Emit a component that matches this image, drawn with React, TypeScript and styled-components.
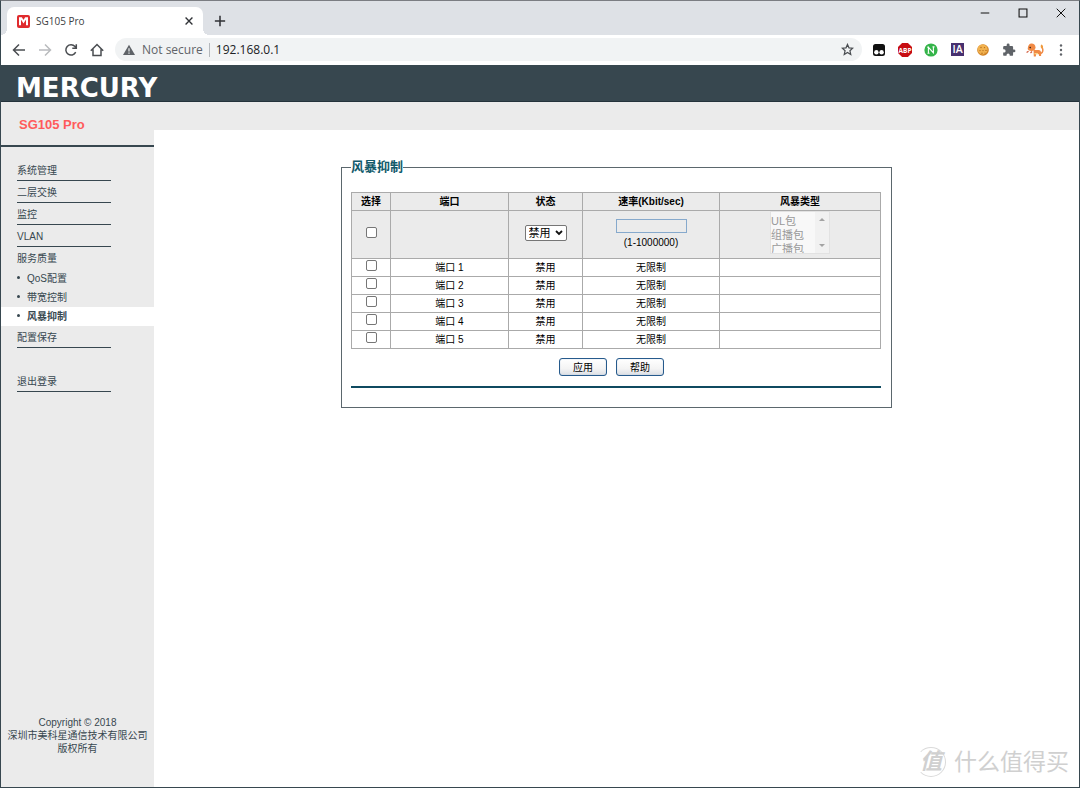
import React from 'react';
import styled, { createGlobalStyle } from 'styled-components';

const GlobalStyle = createGlobalStyle`
  *, *::before, *::after { box-sizing: border-box; }
  body {
    margin: 0;
    font-family: "Liberation Sans", "Noto Sans CJK SC", sans-serif;
    font-size: 10px;
    line-height: 14px;
    color: #000;
    background: #fff;
  }
  a { color: inherit; text-decoration: none; }
  button, input, select { font: inherit; color: inherit; margin: 0; padding: 0; }
  svg { display: block; }
`;

const chromeFont = '"Open Sans", "Noto Sans", sans-serif';

const Window = styled.div`
  display: flex;
  flex-direction: column;
  min-height: 100vh;
  border: 1px solid #37474f;
  border-top-color: #7b7d82;
  position: relative;
`;

/* ---------- browser frame ---------- */

const TabStrip = styled.div`
  display: flex;
  align-items: flex-end;
  height: 34px;
  padding-left: 6px;
  background: #dee1e6;
  font-family: ${chromeFont};
`;

const Tab = styled.div`
  display: flex;
  align-items: center;
  position: relative;
  width: 196px;
  height: 28px;
  padding: 0 8px 0 10px;
  border-radius: 7px 7px 0 0;
  background: #fff;
  font-size: 10px;
  color: #3c4043;

  &::before, &::after {
    content: "";
    position: absolute;
    bottom: 0;
    width: 6px;
    height: 6px;
  }
  &::before { left: -6px; background: radial-gradient(circle at 0 0, #dee1e6 6px, #fff 6px); }
  &::after { right: -6px; background: radial-gradient(circle at 100% 0, #dee1e6 6px, #fff 6px); }
`;

const TabTitle = styled.span`
  flex: 1;
  margin-left: 6px;
`;

const IconButton = styled.button<{ $w?: number; $h?: number }>`
  display: flex;
  align-items: center;
  justify-content: center;
  flex: none;
  width: ${(p) => p.$w ?? 26}px;
  height: ${(p) => p.$h ?? 26}px;
  border: 0;
  background: none;
`;

const WindowControls = styled.div`
  display: flex;
  align-self: flex-start;
  margin-left: auto;
`;

const Toolbar = styled.div`
  display: flex;
  align-items: center;
  height: 30px;
  padding: 0 5px 1px;
  background: #fff;
  font-family: ${chromeFont};
`;

const Omnibox = styled.div`
  display: flex;
  align-items: center;
  flex: 1;
  height: 23px;
  margin: 0 4px 0 5px;
  padding: 0 2px 0 8px;
  border-radius: 12px;
  background: #f1f3f4;
  font-size: 12px;
  color: #5f6368;
`;

const Security = styled.span`
  margin-left: 7px;
  padding-right: 6px;
  border-right: 1px solid #b4b8bc;
  line-height: 14px;
  white-space: nowrap;
`;

const Address = styled.input`
  flex: 1;
  min-width: 0;
  margin-left: 6px;
  border: 0;
  outline: 0;
  background: none;
  color: #202124;
`;

/* ---------- page ---------- */

const Brand = styled.header`
  display: flex;
  align-items: center;
  height: 37px;
  padding: 9px 15px 0;
  border-bottom: 1px solid #24333b;
  background: #37474f;
  color: #fff;
  font: bold 26px/28px "DejaVu Sans", sans-serif;
`;

const Body = styled.div`
  display: flex;
  flex: 1;
  background: #ebebeb;
`;

const Sidebar = styled.aside`
  display: flex;
  flex-direction: column;
  flex: none;
  width: 153px;
  color: #37474f;
`;

const Model = styled.h1`
  margin: 0;
  height: 45px;
  padding-left: 18px;
  border-bottom: 2px solid #37474f;
  font-size: 13px;
  line-height: 45px;
  color: #ff5b5b;
`;

const Menu = styled.nav`
  display: flex;
  flex-direction: column;
  padding-top: 12px;
`;

const MenuItem = styled.a<{ $open?: boolean; $apart?: boolean }>`
  height: 22px;
  width: 94px;
  margin-left: 16px;
  margin-top: ${(p) => (p.$apart ? 22 : 0)}px;
  border-bottom: 1px solid ${(p) => (p.$open ? 'transparent' : '#37474f')};
  line-height: 24px;
`;

const SubItem = styled.a<{ $active?: boolean }>`
  display: flex;
  align-items: center;
  height: 19px;
  padding-left: 16px;
  background: ${(p) => (p.$active ? '#fff' : 'transparent')};
  font-weight: ${(p) => (p.$active ? 'bold' : 'normal')};

  &::before {
    content: "";
    width: 3px;
    height: 3px;
    margin: 0 7px 3px 0;
    border-radius: 50%;
    background: #37474f;
  }
`;

const Copyright = styled.footer`
  margin-top: auto;
  padding: 16px 0 32px;
  line-height: 13px;
  text-align: center;
`;

const Main = styled.main`
  flex: 1;
  margin-top: 28px;
  padding: 28px 16px 16px;
  background: #fff;
`;

const Panel = styled.fieldset`
  max-width: 549px;
  margin: 0 auto;
  padding: 16px 10px 19px 9px;
  border: 1px solid #5b676d;
`;

const Legend = styled.legend`
  padding: 0;
  font-size: 13px;
  line-height: 18px;
  font-weight: bold;
  color: #125a6b;
`;

const Table = styled.table`
  width: 100%;
  table-layout: fixed;
  border-collapse: collapse;
  text-align: center;
`;

const Col = styled.col<{ $w: number }>`
  width: ${(p) => p.$w}px;
`;

const Row = styled.tr<{ $head?: boolean; $edit?: boolean }>`
  height: ${(p) => (p.$edit ? 48 : 18)}px;
  background: ${(p) => (p.$head || p.$edit ? '#ebebeb' : '#fff')};

  th, td {
    padding: 0;
    border: 1px solid #aaa;
  }
`;

const Control = styled.div`
  padding-bottom: 4px;
`;

const Checkbox = styled.input.attrs({ type: 'checkbox' })`
  appearance: none;
  display: block;
  width: 11px;
  height: 11px;
  margin: 0 auto;
  border: 1px solid #767676;
  border-radius: 2px;
  background: #fff;

  &:checked { background: #1a73e8; }
`;

const SelectBox = styled.span`
  display: inline-grid;
  align-items: center;
  vertical-align: middle;

  > * { grid-area: 1 / 1; }
  > svg { justify-self: end; margin-right: 4px; pointer-events: none; }
`;

const Select = styled.select`
  appearance: none;
  width: 42px;
  height: 16px;
  padding-left: 3px;
  border: 1px solid #767676;
  border-radius: 2px;
  background: #fff;
  font-size: 11px;
  line-height: 14px;
`;

const RateInput = styled.input`
  display: block;
  width: 71px;
  height: 14px;
  margin: 0 auto 3px;
  border: 1px solid #86a9cc;
  background: #ebebeb;
`;

const ListBox = styled.div`
  display: flex;
  width: 60px;
  height: 43px;
  margin: 0 auto;
  border: 1px solid #e2e2e2;
  background: #f8f8f8;
`;

const List = styled.select`
  appearance: none;
  flex: 1;
  min-width: 0;
  height: 41px;
  border: 0;
  overflow: hidden;
  background: #f8f8f8;
  font-size: 11px;
  text-align: left;

  option {
    height: 14px;
    min-height: 0;
    padding: 0;
    line-height: 13px;
    color: #707070;
  }
`;

const ScrollTrack = styled.div`
  display: flex;
  flex-direction: column;
  align-items: center;
  justify-content: space-between;
  width: 14px;
  padding: 6px 0;
  background: #f1f1f1;
`;

const Actions = styled.div`
  display: flex;
  justify-content: center;
  gap: 9px;
  padding: 9px 9px 10px 0;
  border-bottom: 2px solid #0f4a60;
`;

const ActionButton = styled.button`
  width: 48px;
  height: 18px;
  border: 1px solid #265a8c;
  border-radius: 3px;
  background: linear-gradient(#fff, #f4f4f4 60%, #dcdfe4);
  line-height: 18px;
  box-shadow: inset 0 0 1px #8fb0d0;
`;

const Watermark = styled.div`
  position: absolute;
  right: 10px;
  bottom: 10px;
  display: flex;
  align-items: center;
  gap: 8px;
  font-size: 23px;
  line-height: 30px;
  color: #d0d0d0;
`;

const Seal = styled.span`
  display: flex;
  align-items: center;
  justify-content: center;
  width: 30px;
  height: 30px;
  border: 1px solid #dadada;
  border-left-color: transparent;
  border-radius: 50%;
  font-size: 22px;
  font-style: italic;
  font-weight: bold;
`;

/* ---------- drawings ---------- */

const Stroke = ({ d, size = 14, color = '#4a4d51', width = 1.5 }: { d: string; size?: number; color?: string; width?: number }) => (
  <svg width={size} height={size} viewBox="0 0 14 14" fill="none" stroke={color} strokeWidth={width}>
    <path d={d} />
  </svg>
);

const Favicon = () => (
  <svg width="13" height="13" viewBox="0 0 13 13">
    <rect width="13" height="13" rx="2" fill="#e02b2e" />
    <path d="M3 10.200V3.200h1.300l2.200 3.500 2.200-3.500H10v7" fill="none" stroke="#fff" strokeWidth="2" />
  </svg>
);

const Warning = () => (
  <svg width="12" height="12" viewBox="0 0 12 12">
    <path d="M6 .8 12 11H0z" fill="#5f6368" />
    <path d="M6 4.2v3.4M6 8.5v1.3" stroke="#f1f3f4" strokeWidth="1.2" />
  </svg>
);

const MaskIcon = () => (
  <svg width="12" height="12" viewBox="0 0 12 12">
    <path d="M2.500 0h7A2.500 2.500 0 0 1 12 2.500v7a2.500 2.500 0 0 1-2.500 2.500h-7A2.500 2.500 0 0 1 0 9.500v-7A2.500 2.500 0 0 1 2.500 0z" fill="#111" />
    <circle cx="3.400" cy="8.300" r="2.200" fill="#fff" />
    <circle cx="8.600" cy="8.300" r="2.200" fill="#fff" />
  </svg>
);

const BlockIcon = () => (
  <svg width="14" height="14" viewBox="0 0 14 14">
    <path d="M4.100 0h5.800L14 4.100v5.800L9.900 14H4.100L0 9.900V4.100z" fill="#c70d12" />
    <text x="7" y="9.500" textAnchor="middle" fontSize="6.500" fontWeight="bold" fontFamily="Open Sans" fill="#fff">ABP</text>
  </svg>
);

const NoteIcon = () => (
  <svg width="14" height="14" viewBox="0 0 14 14">
    <circle cx="7" cy="7" r="6.600" fill="#35b44a" />
    <path d="M4.400 10.200V4.300l5 5.600V3.800M3.200 4.200h1.700M8.500 3.900h2M3.500 10.200h2" fill="none" stroke="#fff" strokeWidth="1.100" />
  </svg>
);

const ArchiveIcon = () => (
  <svg width="13" height="13" viewBox="0 0 13 13">
    <rect width="13" height="13" fill="#47306f" />
    <text x="6.500" y="10.200" textAnchor="middle" fontSize="10.500" fontWeight="600" fontFamily="Open Sans" fill="#fff">IA</text>
  </svg>
);

const CookieIcon = () => (
  <svg width="12" height="12" viewBox="0 0 12 12">
    <circle cx="6" cy="6" r="5.800" fill="#cf7f22" />
    <circle cx="5.600" cy="5.400" r="5" fill="#f2b24f" />
    <g fill="#b06a1c">
      <circle cx="4" cy="3.500" r=".7" />
      <circle cx="7.500" cy="3.600" r=".7" />
      <circle cx="3" cy="6.600" r=".7" />
      <circle cx="6" cy="6.600" r=".7" />
      <circle cx="9" cy="6.400" r=".7" />
      <circle cx="5" cy="9.300" r=".7" />
      <circle cx="8" cy="9" r=".6" />
    </g>
  </svg>
);

const PuzzleIcon = () => (
  <svg width="14" height="14" viewBox="0 0 24 24" fill="#5f6368">
    <path d="M20.500 11H19V7a2 2 0 0 0-2-2h-4V3.500a2.500 2.500 0 0 0-5 0V5H4a2 2 0 0 0-2 2v3.800h1.500a2.700 2.700 0 0 1 0 5.400H2V20a2 2 0 0 0 2 2h3.800v-1.500a2.700 2.700 0 0 1 5.400 0V22H17a2 2 0 0 0 2-2v-4h1.500a2.500 2.500 0 0 0 0-5z" />
  </svg>
);

const PetIcon = () => (
  <svg width="18" height="14" viewBox="0 0 18 14">
    <path d="M16 4.500c1.400 2 1.200 5-1.200 6" fill="none" stroke="#f08a45" strokeWidth="1.500" />
    <path d="M15.300 1.500c1.600.6 2.200 2.200 1.500 4l-1.700-.6c-.7-1.200-.5-2.400.2-3.400z" fill="#ef9a3c" />
    <path d="M7.500 7h5c1.600 0 2.600 1.200 2.600 3v3h-2l-.5-2h-2.400l-.4 2.500h-2z" fill="#f08a45" />
    <path d="M8.500 10h3.500v1.300H8.500z" fill="#f7d488" />
    <path d="M5 .5C7.500.2 9.500 1.800 9.500 4.200 9.500 6.700 7.800 8 5.500 8 3 8 1.600 7 1.700 5.500 1.900 3 3 .8 5 .5z" fill="#f08a45" />
    <circle cx="4.200" cy="4.600" r=".8" fill="#31231c" />
    <path d="M.6 9.500 2.500 8.200M6 8.500l-1.500 1.500" stroke="#d0593a" strokeWidth="1.200" />
  </svg>
);

const Kebab = () => (
  <svg width="4" height="12" viewBox="0 0 4 12" fill="#5f6368">
    <circle cx="2" cy="1.500" r="1.200" />
    <circle cx="2" cy="6" r="1.200" />
    <circle cx="2" cy="10.500" r="1.200" />
  </svg>
);

const ScrollArrow = ({ up }: { up?: boolean }) => (
  <svg width="6" height="3" viewBox="0 0 6 3" fill="#a3a3a3">
    <path d={up ? 'M0 3 3 0l3 3z' : 'M0 0l3 3 3-3z'} />
  </svg>
);

/* ---------- data ---------- */

const extensions = [
  { name: 'Userscripts', icon: <MaskIcon /> },
  { name: 'Ad blocker', icon: <BlockIcon /> },
  { name: 'Notes', icon: <NoteIcon /> },
  { name: 'Archive', icon: <ArchiveIcon /> },
  { name: 'Cookies', icon: <CookieIcon /> },
  { name: 'Extensions', icon: <PuzzleIcon /> },
  { name: 'Profile', icon: <PetIcon /> },
  { name: 'Menu', icon: <Kebab /> },
];

const sections = ['系统管理', '二层交换', '监控', 'VLAN'];
const qosPages = ['QoS配置', '带宽控制', '风暴抑制'];
const headings = ['选择', '端口', '状态', '速率(Kbit/sec)', '风暴类型'];
const columnWidths = [39, 118, 74, 137, 161];
const ports = [1, 2, 3, 4, 5];

const Browser = () => (
  <>
    <TabStrip>
      <Tab>
        <Favicon />
        <TabTitle>SG105 Pro</TabTitle>
        <IconButton $w={12} $h={16} aria-label="Close tab">
          <Stroke size={12} color="#303236" width={1.6} d="M3 3l8 8M11 3l-8 8" />
        </IconButton>
      </Tab>
      <IconButton $w={34} $h={28} aria-label="New tab">
        <Stroke size={12} color="#303236" width={1.8} d="M7 1v12M1 7h12" />
      </IconButton>
      <WindowControls>
        <IconButton $w={38} $h={24} aria-label="Minimize">
          <Stroke size={10} color="#111" width={1.4} d="M1 7h12" />
        </IconButton>
        <IconButton $w={38} $h={24} aria-label="Maximize">
          <Stroke size={10} color="#111" width={1.5} d="M1.500 1.500h11v11h-11z" />
        </IconButton>
        <IconButton $w={37} $h={24} aria-label="Close">
          <Stroke size={10} color="#111" width={1.4} d="M1 1l12 12M13 1 1 13" />
        </IconButton>
      </WindowControls>
    </TabStrip>
    <Toolbar>
      <IconButton aria-label="Back"><Stroke d="M13 7H2M7 1.500 1.500 7 7 12.500" /></IconButton>
      <IconButton aria-label="Forward"><Stroke color="#b9bbbe" d="M1 7h11M7 1.500 12.500 7 7 12.500" /></IconButton>
      <IconButton aria-label="Reload"><Stroke d="M11.700 9.200A5.200 5.200 0 1 1 11 3.500l1 1.200M12.300 1.200v4H8.300" /></IconButton>
      <IconButton aria-label="Home"><Stroke d="M.8 7.800 7 1.500l6.200 6.300M3 6.300v6.200h8V6.300" /></IconButton>
      <Omnibox>
        <Warning />
        <Security>Not secure</Security>
        <Address aria-label="Address" defaultValue="192.168.0.1" />
        <IconButton $h={23} aria-label="Bookmark">
          <Stroke size={13} width={1.3} d="M7 1.500l1.600 3.700 4 .4-3 2.700.9 4L7 10.200l-3.500 2.100.9-4-3-2.700 4-.4z" />
        </IconButton>
      </Omnibox>
      {extensions.map((e) => (
        <IconButton key={e.name} aria-label={e.name}>{e.icon}</IconButton>
      ))}
    </Toolbar>
  </>
);

const Navigation = () => (
  <Sidebar>
    <Model>SG105 Pro</Model>
    <Menu>
      {sections.map((s) => <MenuItem key={s} href="#">{s}</MenuItem>)}
      <MenuItem href="#" $open>服务质量</MenuItem>
      {qosPages.map((p) => <SubItem key={p} href="#" $active={p === '风暴抑制'}>{p}</SubItem>)}
      <MenuItem href="#">配置保存</MenuItem>
      <MenuItem href="#" $apart>退出登录</MenuItem>
    </Menu>
    <Copyright>
      Copyright © 2018<br />深圳市美科星通信技术有限公司<br />版权所有
    </Copyright>
  </Sidebar>
);

const StormControl = () => (
  <Panel>
    <Legend>风暴抑制</Legend>
    <Table>
      <colgroup>
        {columnWidths.map((w) => <Col key={w} $w={w} />)}
      </colgroup>
      <thead>
        <Row $head>{headings.map((h) => <th key={h} scope="col">{h}</th>)}</Row>
      </thead>
      <tbody>
        <Row $edit>
          <td><Control><Checkbox aria-label="选择全部端口" /></Control></td>
          <td />
          <td>
            <Control>
              <SelectBox>
                <Select aria-label="状态" defaultValue="禁用">
                  <option>禁用</option>
                  <option>启用</option>
                </Select>
                <svg width="8" height="6" viewBox="0 0 8 6" fill="none" stroke="#111" strokeWidth="1.800">
                  <path d="M1 1l3 3 3-3" />
                </svg>
              </SelectBox>
            </Control>
          </td>
          <td>
            <RateInput id="rate" aria-label="速率" disabled />
            <label htmlFor="rate">(1-1000000)</label>
          </td>
          <td>
            <Control>
              <ListBox>
                <List aria-label="风暴类型" multiple size={3} disabled>
                  <option>UL包</option>
                  <option>组播包</option>
                  <option>广播包</option>
                </List>
                <ScrollTrack>
                  <ScrollArrow up />
                  <ScrollArrow />
                </ScrollTrack>
              </ListBox>
            </Control>
          </td>
        </Row>
        {ports.map((n) => (
          <Row key={n}>
            <td><Control><Checkbox aria-label={`端口 ${n}`} /></Control></td>
            <td>端口 {n}</td>
            <td>禁用</td>
            <td>无限制</td>
            <td />
          </Row>
        ))}
      </tbody>
    </Table>
    <Actions>
      <ActionButton type="button">应用</ActionButton>
      <ActionButton type="button">帮助</ActionButton>
    </Actions>
  </Panel>
);

export default function App() {
  return (
    <>
      <GlobalStyle />
      <Window>
        <Browser />
        <Brand>MERCURY</Brand>
        <Body>
          <Navigation />
          <Main>
            <StormControl />
          </Main>
        </Body>
        <Watermark>
          <Seal>值</Seal>
          <span>什么值得买</span>
        </Watermark>
      </Window>
    </>
  );
}
